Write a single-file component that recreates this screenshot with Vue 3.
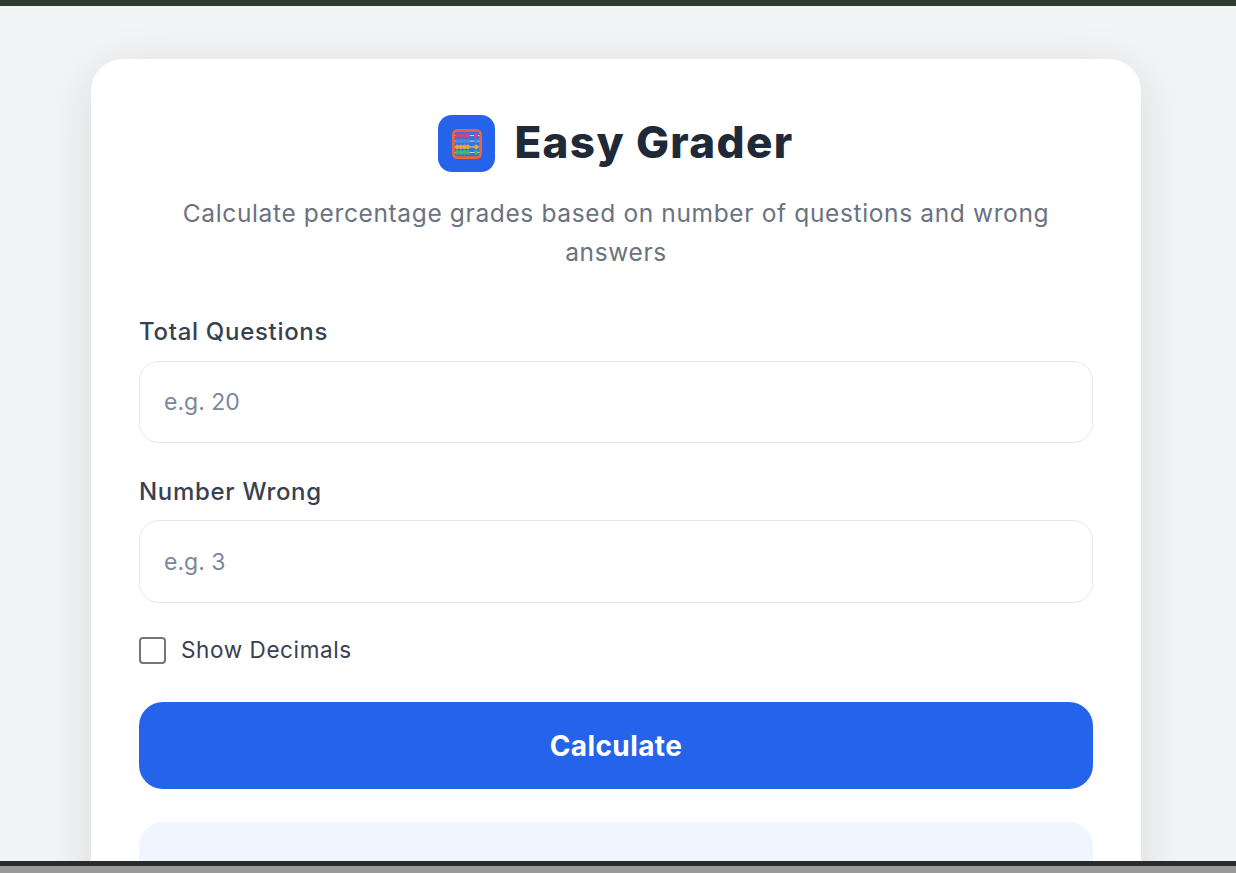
<template>
  <div class="screen">
    <div class="top_bar"></div>
    <main class="page">
      <section class="card">
        <header class="head">
          <div class="logo">
            <svg width="30" height="30" viewBox="0 0 29 29">
              <rect x="1.3" y="1.3" width="26.4" height="26.4" rx="4" fill="#3a6fdc" stroke="#f4603a" stroke-width="2.6" />
              <g v-for="row in rows" :key="row.y">
                <line x1="2.5" x2="26.5" :y1="row.y" :y2="row.y" stroke="#c4d3f2" stroke-width="1" />
                <ellipse v-for="x in beads" :key="x" :cx="x" :cy="row.y" rx="1.8" ry="2.3" :fill="row.color" />
              </g>
            </svg>
          </div>
          <h1>Easy Grader</h1>
        </header>
        <p class="sub">Calculate percentage grades based on number of questions and wrong answers</p>

        <label class="field_label" for="total">Total Questions</label>
        <input id="total" v-model="total" class="field" type="number" placeholder="e.g. 20" />

        <label class="field_label second" for="wrong">Number Wrong</label>
        <input id="wrong" v-model="wrong" class="field field_second" type="number" placeholder="e.g. 3" />

        <label class="check_row">
          <input v-model="decimals" class="check" type="checkbox" />
          <span>Show Decimals</span>
        </label>

        <button class="calc" type="button" @click="calculate">Calculate</button>

        <div class="result">{{ result }}</div>
      </section>
    </main>
    <div class="bottom_dark"></div>
    <div class="bottom_grey"></div>
  </div>
</template>

<script setup>
import { ref } from 'vue'

const total = ref('')
const wrong = ref('')
const decimals = ref(false)
const result = ref('')

const rows = [
  { y: 6.3, color: '#e8386d' },
  { y: 11.7, color: '#3f8fd8' },
  { y: 17.3, color: '#f5a623' },
  { y: 22.7, color: '#35c06f' }
]
const beads = [5, 8.6, 12, 15.4, 23.3]

function calculate() {
  const t = Number(total.value)
  if (!t) return
  const pct = ((t - Number(wrong.value)) / t) * 100
  result.value = (decimals.value ? pct.toFixed(2) : Math.round(pct)) + '%'
}
</script>

<style>
html,
body {
  margin: 0;
  overflow: hidden;
}
</style>

<style scoped>
.screen {
  height: 100vh;
  display: flex;
  flex-direction: column;
  font-family: "Inter", "Open Sans", sans-serif;
  background: #f3f4f6;
}

.top_bar {
  height: 6px;
  flex: none;
  background: #2f3b2c;
}

.page {
  flex: 1;
  min-height: 0;
  overflow: hidden;
  padding-top: 53px;
  display: flex;
  justify-content: center;
}

.card {
  width: 1050px;
  height: 1000px;
  flex: none;
  box-sizing: border-box;
  margin-right: 4px;
  padding: 56px 48px 48px;
  background: #fff;
  border-radius: 32px;
  box-shadow: 0 10px 50px rgba(0, 0, 0, 0.11);
  display: flex;
  flex-direction: column;
}

.head {
  display: flex;
  justify-content: center;
  align-items: center;
  gap: 19px;
  height: 57px;
}

.logo {
  width: 57px;
  height: 57px;
  border-radius: 14px;
  background: #2563eb;
  display: flex;
  align-items: center;
  justify-content: center;
}

h1 {
  margin: 0 0 3px;
  font-size: 44px;
  font-weight: 800;
  letter-spacing: 1.35px;
  color: #1f2937;
}

.sub {
  margin: 22px 0 0;
  font-size: 24.5px;
  line-height: 38.5px;
  letter-spacing: 0.64px;
  text-align: center;
  color: #6b7280;
}

.field_label {
  margin-top: 43px;
  font-size: 24px;
  line-height: 36px;
  font-weight: 500;
  letter-spacing: 0.7px;
  color: #374151;
}

.second {
  margin-top: 31px;
}

.field {
  margin-top: 11px;
  height: 82px;
  flex: none;
  box-sizing: border-box;
  padding: 0 24px;
  border: 1px solid #e5e7eb;
  border-radius: 20px;
  outline: none;
  font: inherit;
  font-size: 23px;
  color: #1f2937;
  appearance: textfield;
}

.field_second {
  margin-top: 10px;
  height: 83px;
}

.field::placeholder {
  color: #7b879d;
  opacity: 1;
}

.check_row {
  margin-top: 32px;
  display: flex;
  align-items: center;
  gap: 15px;
  font-size: 22.5px;
  line-height: 30px;
  letter-spacing: 0.6px;
  color: #374151;
}

.check {
  appearance: none;
  width: 27px;
  height: 27px;
  margin: 0;
  box-sizing: border-box;
  border: 2px solid #767676;
  border-radius: 4px;
  background: #fff;
}

.calc {
  margin-top: 37px;
  height: 87px;
  flex: none;
  border: none;
  border-radius: 24px;
  background: #2563eb;
  color: #fff;
  font: inherit;
  font-size: 28px;
  font-weight: 700;
  letter-spacing: 0.4px;
  cursor: pointer;
}

.result {
  margin-top: 33px;
  height: 120px;
  flex: none;
  border-radius: 24px;
  background: #eff6ff;
}

.bottom_dark {
  height: 5px;
  flex: none;
  background: #2b2b2b;
}

.bottom_grey {
  height: 7px;
  flex: none;
  background: #9a9a9a;
}
</style>
